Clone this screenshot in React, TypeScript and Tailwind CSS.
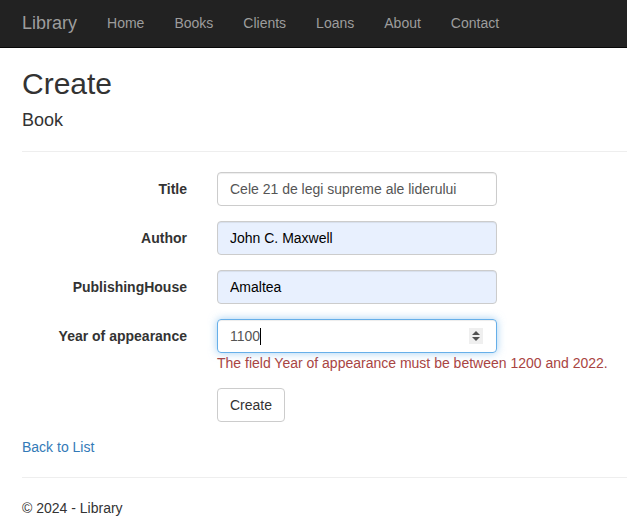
import React from "react"

const links = ["Home", "Books", "Clients", "Loans", "About", "Contact"]

function Field({ label, value, autofill }: { label: string; value: string; autofill?: boolean }) {
  return (
    <div className="flex mb-[15px]">
      <label className="w-[165px] shrink-0 text-right pt-[7px] font-bold leading-5">{label}</label>
      <input
        readOnly
        defaultValue={value}
        className={
          "ml-[30px] w-[280px] h-[34px] px-3 border border-[#ccc] rounded-[4px] text-[#555] outline-none shadow-[inset_0_1px_1px_rgba(0,0,0,0.075)] " +
          (autofill ? "bg-[#e8f0fe] text-black" : "bg-white")
        }
      />
    </div>
  )
}

export default function App() {
  return (
    <div className="min-h-screen bg-white text-[#333] text-[14px] leading-5 font-['Liberation_Sans',Arial,sans-serif]">
      {/* Navbar */}
      <nav className="h-[48px] pb-[2px] bg-[#222] border-b border-[#080808] flex items-center">
        <span className="pl-[22px] pr-[15px] text-[18px] text-[#9d9d9d]">Library</span>
        {links.map((l) => (
          <a key={l} className="px-[15px] text-[#9d9d9d]">
            {l}
          </a>
        ))}
      </nav>

      <div className="pl-[22px]">
        <h2 className="pt-[19px] text-[30px] leading-[33px]">Create</h2>
        <h4 className="mt-[10px] text-[18px] leading-[20px]">Book</h4>
        <hr className="mt-[21px] border-t border-[#eee]" />

        <div className="mt-[20px]">
          <Field label="Title" value="Cele 21 de legi supreme ale liderului" />
          <Field label="Author" value="John C. Maxwell" autofill />
          <Field label="PublishingHouse" value="Amaltea" autofill />

          {/* Year of appearance */}
          <div className="flex mb-[15px]">
            <label className="w-[165px] shrink-0 text-right pt-[7px] font-bold leading-5">Year of appearance</label>
            <div className="ml-[30px]">
              <div className="relative w-[280px] h-[34px] px-3 flex items-center border border-[#66afe9] rounded-[4px] text-[#555] shadow-[inset_0_1px_1px_rgba(0,0,0,0.075),0_0_8px_rgba(102,175,233,0.6)]">
                <span>1100</span>
                <span className="w-px h-[17px] bg-black" />
                <div className="absolute right-[13px] top-[8px] w-[14px] h-[16px] bg-[#efefef] flex flex-col items-center justify-center gap-[2px]">
                  <span className="w-0 h-0 border-x-[4px] border-x-transparent border-b-[4px] border-b-[#505050]" />
                  <span className="w-0 h-0 border-x-[4px] border-x-transparent border-t-[4px] border-t-[#505050]" />
                </div>
              </div>
              <span className="block text-[#a94442]">The field Year of appearance must be between 1200 and 2022.</span>
              <button className="mt-[15px] h-[34px] px-3 border border-[#ccc] rounded-[4px] bg-white text-[#333]">
                Create
              </button>
            </div>
          </div>
        </div>

        <div>
          <a className="text-[#337ab7]">Back to List</a>
        </div>
        <hr className="mt-[20px] border-t border-[#eee]" />
        <footer>
          <p className="mt-[20px]">© 2024 - Library</p>
        </footer>
      </div>
    </div>
  )
}
